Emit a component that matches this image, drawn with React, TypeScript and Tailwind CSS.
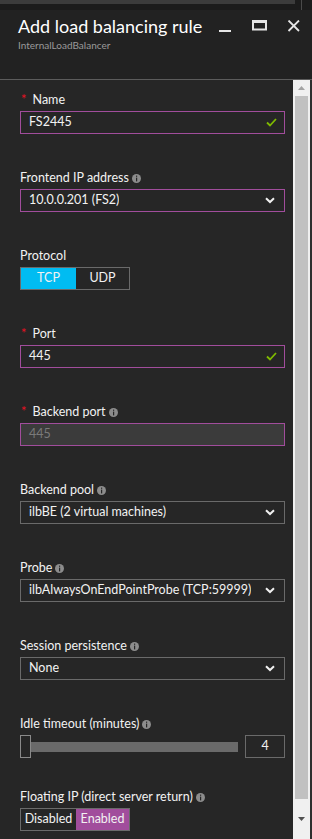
import React from 'react';

function Info() {
  return (
    <svg width="9" height="9" viewBox="0 0 9 9" className="ml-[3px] shrink-0">
      <circle cx="4.5" cy="4.5" r="4.5" fill="#8c8c8c" />
      <rect x="4" y="1.6" width="1.2" height="1.2" fill="#262626" />
      <rect x="4" y="3.6" width="1.2" height="3.8" fill="#262626" />
    </svg>
  );
}

function Check() {
  return (
    <svg width="11" height="9" viewBox="0 0 11 9" className="ml-auto mr-[7px] shrink-0">
      <path d="M1 4.5 L4 7.5 L10 1" stroke="#7fba00" strokeWidth="1.8" fill="none" />
    </svg>
  );
}

function Chevron() {
  return (
    <svg width="10" height="7" viewBox="0 0 10 7" className="ml-auto mr-[9px] shrink-0">
      <path d="M1 1.2 L5 5 L9 1.2" stroke="#f0f0f0" strokeWidth="2" fill="none" />
    </svg>
  );
}

function Label({ text, required, info }: { text: string; required?: boolean; info?: boolean }) {
  return (
    <div className="flex items-center h-4 mb-[3px] text-[12.5px] text-[#f2f2f2] leading-4">
      {required && <span className="text-[#e81123] text-[13px] mr-[6px] ml-[1px] -mt-[3px]">*</span>}
      <span>{text}</span>
      {info && <Info />}
    </div>
  );
}

function TextBox({ value, purple, check, disabled }: { value: string; purple?: boolean; check?: boolean; disabled?: boolean }) {
  return (
    <div
      className={`h-[23px] border pl-[8px] flex items-center text-[12.5px] ${purple ? 'border-[#a14d9c]' : 'border-[#6a6a6a]'} ${disabled ? 'bg-[#3b3b3b] text-[#7a7a7a]' : 'bg-[#262626] text-[#f2f2f2]'}`}
    >
      <span>{value}</span>
      {check && <Check />}
    </div>
  );
}

function Select({ value, purple }: { value: string; purple?: boolean }) {
  return (
    <div
      className={`h-[23px] border pl-[8px] flex items-center text-[12.5px] text-[#f2f2f2] bg-[#262626] ${purple ? 'border-[#a14d9c]' : 'border-[#6a6a6a]'}`}
    >
      <span className="truncate">{value}</span>
      <Chevron />
    </div>
  );
}

function Toggle({ left, right, active }: { left: string; right: string; active: 'left' | 'right' }) {
  return (
    <div className="flex mt-[1px] w-[110px] h-[23px] border border-[#6a6a6a] text-[12.5px] text-[#f2f2f2]">
      <div className={`w-[55px] flex items-center justify-center ${active === 'left' ? 'bg-[#00bcf2]' : ''}`}>{left}</div>
      <div className={`flex-1 flex items-center justify-center ${active === 'right' ? 'bg-[#a14d9c]' : ''}`}>{right}</div>
    </div>
  );
}

export default function App() {
  return (
    <div className="w-[312px] h-[839px] bg-[#262626] flex flex-col overflow-hidden font-['Lato',sans-serif]">
      {/* top strip */}
      <div className="h-[10px] flex">
        <div className="w-[295px] flex flex-col">
          <div className="h-[4px] bg-[#3c3c3c]" />
          <div className="flex-1 bg-[#1c1c1c]" />
        </div>
        <div className="w-[6px] bg-[#1c1c1c]" />
        <div className="w-[1px] bg-[#4a4a4a]" />
        <div className="flex-1 bg-[#1c1c1c]" />
      </div>

      {/* header */}
      <div className="h-[70px] bg-[#222222] border-b border-[#5c5c5c] flex">
        <div className="flex-1 pl-[18px] pt-[3px]">
          <div className="text-[18px] leading-[26px] text-white">Add load balancing rule</div>
          <div className="text-[10px] leading-3 text-[#9a9a9a]">InternalLoadBalancer</div>
        </div>
        <div className="flex items-start gap-[20px] pt-[10px] pr-[11px]">
          <svg width="14" height="14" viewBox="0 0 14 14">
            <rect x="1" y="10" width="12" height="2" fill="#e6e6e6" />
          </svg>
          <svg width="16" height="14" viewBox="0 0 16 14">
            <rect x="1" y="0.5" width="13" height="9" stroke="#e6e6e6" strokeWidth="2" fill="none" />
            <rect x="1" y="0" width="13" height="3" fill="#e6e6e6" />
          </svg>
          <svg width="14" height="14" viewBox="0 0 14 14" className="-ml-[1px]">
            <path d="M1.5 0.5 L12 11 M12 0.5 L1.5 11" stroke="#e6e6e6" strokeWidth="1.8" />
          </svg>
        </div>
      </div>

      {/* body */}
      <div className="flex-1 flex min-h-0">
        <div className="flex-1 pl-[20px] pr-[8px] pt-[12px] flex flex-col">
          <Label text="Name" required />
          <TextBox value="FS2445" purple check />

          <div className="mt-[36px]">
            <Label text="Frontend IP address" info />
            <Select value="10.0.0.201 (FS2)" purple />
          </div>

          <div className="mt-[36px]">
            <Label text="Protocol" />
            <Toggle left="TCP" right="UDP" active="left" />
          </div>

          <div className="mt-[36px]">
            <Label text="Port" required />
            <TextBox value="445" purple check />
          </div>

          <div className="mt-[36px]">
            <Label text="Backend port" required info />
            <TextBox value="445" purple disabled />
          </div>

          <div className="mt-[36px]">
            <Label text="Backend pool" info />
            <Select value="ilbBE (2 virtual machines)" />
          </div>

          <div className="mt-[36px]">
            <Label text="Probe" info />
            <Select value="ilbAlwaysOnEndPointProbe (TCP:59999)" />
          </div>

          <div className="mt-[36px]">
            <Label text="Session persistence" info />
            <Select value="None" />
          </div>

          <div className="mt-[36px]">
            <Label text="Idle timeout (minutes)" info />
            <div className="flex items-center h-[23px]">
              <div className="w-[11px] h-[23px] border border-[#8a8a8a] bg-[#262626]" />
              <div className="w-[207px] h-[10px] bg-[#6a6a6a]" />
              <div className="ml-[7px] w-[40px] h-[23px] border border-[#6a6a6a] flex items-center justify-center text-[12.5px] text-[#f2f2f2]">
                4
              </div>
            </div>
          </div>

          <div className="mt-[31px]">
            <Label text="Floating IP (direct server return)" info />
            <Toggle left="Disabled" right="Enabled" active="right" />
          </div>
        </div>

        {/* scrollbar */}
        <div className="w-[17px] bg-[#f0f0f0] flex flex-col items-center">
          <div className="h-[16px] flex items-center justify-center">
            <svg width="7" height="4" viewBox="0 0 7 4">
              <path d="M0 4 L3.5 0 L7 4 Z" fill="#a3a3a3" />
            </svg>
          </div>
          <div className="w-[13px] h-[703px] bg-[#c1c1c1]" />
          <div className="flex-1 flex items-center justify-center">
            <svg width="7" height="4" viewBox="0 0 7 4">
              <path d="M0 0 L3.5 4 L7 0 Z" fill="#505050" />
            </svg>
          </div>
        </div>
        <div className="w-[2px] bg-[#2e2e2e]" />
      </div>
    </div>
  );
}
